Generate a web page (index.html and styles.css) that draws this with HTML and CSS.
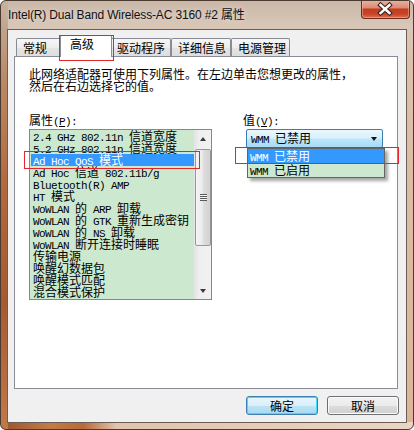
FILE: index.html
```html
<!DOCTYPE html>
<html lang="zh-CN">
<head>
<meta charset="utf-8">
<title>属性</title>
<link rel="stylesheet" href="styles.css">
</head>
<body>
<div class="window">
  <div class="titlebar">
    <span class="title">Intel(R) Dual Band Wireless-AC 3160 #2 属性</span>
    <div class="close">
      <svg width="49" height="19" viewBox="0 0 49 19">
        <path d="M19.5 6 L28.5 14 M28.5 6 L19.5 14" stroke="#3b2622" stroke-width="4.6" stroke-linecap="square" fill="none"/>
        <path d="M19.5 6 L28.5 14 M28.5 6 L19.5 14" stroke="#ffffff" stroke-width="2.4" stroke-linecap="square" fill="none"/>
      </svg>
    </div>
  </div>
  <div class="client">
    <div class="tabs">
      <div class="tab t1">常规</div>
      <div class="tab t2 active">高级</div>
      <div class="tab t3">驱动程序</div>
      <div class="tab t4">详细信息</div>
      <div class="tab t5">电源管理</div>
    </div>
    <div class="panel">
      <p class="desc">此网络适配器可使用下列属性。在左边单击您想更改的属性，<br>然后在右边选择它的值。</p>
      <div class="props">
        <div class="col-prop">
          <div class="label">属性<span class="en">(<u>P</u>):</span></div>
          <div class="listbox">
            <ul class="items">
              <li><span class="en">2.4 GHz 802.11n </span>信道宽度</li>
              <li><span class="en">5.2 GHz 802.11n </span>信道宽度</li>
              <li class="sel"><span class="en">Ad Hoc QoS </span>模式</li>
              <li><span class="en">Ad Hoc </span>信道<span class="en"> 802.11b/g</span></li>
              <li><span class="en">Bluetooth(R) AMP</span></li>
              <li><span class="en">HT </span>模式</li>
              <li><span class="en">WoWLAN </span>的<span class="en"> ARP </span>卸载</li>
              <li><span class="en">WoWLAN </span>的<span class="en"> GTK </span>重新生成密钥</li>
              <li><span class="en">WoWLAN </span>的<span class="en"> NS </span>卸载</li>
              <li><span class="en">WoWLAN </span>断开连接时睡眠</li>
              <li>传输电源</li>
              <li>唤醒幻数据包</li>
              <li>唤醒模式匹配</li>
              <li>混合模式保护</li>
            </ul>
            <div class="vscroll">
              <div class="sb-btn"><span class="tri up"></span></div>
              <div class="track">
                <div class="thumb"><span class="grip"></span></div>
              </div>
              <div class="sb-btn"><span class="tri down"></span></div>
            </div>
          </div>
        </div>
        <div class="col-val">
          <div class="label">值<span class="en">(<u>V</u>):</span></div>
          <div class="combo">
            <span class="combo-text"><span class="en">WMM </span>已禁用</span>
            <span class="caret"></span>
            <ul class="dropdown">
              <li class="sel"><span class="en">WMM </span>已禁用</li>
              <li><span class="en">WMM </span>已启用</li>
            </ul>
          </div>
        </div>
      </div>
    </div>
    <div class="buttons">
      <button class="btn default">确定</button>
      <button class="btn">取消</button>
    </div>
  </div>
  <div class="mark mark-tab"></div>
  <div class="mark mark-item"></div>
  <div class="mark mark-opt"></div>
</div>
</body>
</html>
```
FILE: styles.css
```css
* { box-sizing: border-box; }
html, body {
  margin: 0;
  padding: 0;
  background: #ffffff;
}
body {
  width: 414px;
  height: 430px;
  overflow: hidden;
  font-family: "Noto Sans CJK SC", sans-serif;
  font-size: 12px;
  color: #000;
}
.window {
  position: relative;
  width: 414px;
  height: 430px;
  border: 1px solid #4a3a30;
  border-radius: 6px;
  background:
    linear-gradient(180deg, #c6b3a3 0, #b98a66 18%, #b0683c 45%, #a65a30 70%, #c07a4a 100%) left top / 7px 100% no-repeat,
    linear-gradient(to right, #9a5230 0, #c27b48 12%, #b86a3a 20%, #e0c4ac 28%, #ead6c4 100%) left bottom / 100% 7px no-repeat,
    linear-gradient(180deg, #c9b7a8 0, #d9c7b8 26px, #dcc0a8 60px, #dab59a 100%);
  overflow: hidden;
}
.titlebar {
  display: flex;
  align-items: flex-start;
  height: 28px;
  padding-left: 7px;
  padding-right: 3px;
}
.title {
  font-family: "Liberation Sans", "Noto Sans CJK SC", sans-serif;
  font-size: 12px;
  letter-spacing: -0.15px;
  line-height: 28px;
  color: #111;
  text-shadow: 0 0 6px rgba(255,255,255,.7);
}
.close {
  margin-left: auto;
  width: 49px;
  height: 19px;
  margin-top: -1px;
  border: 1px solid #6a2c20;
  border-top: none;
  border-radius: 0 0 4px 4px;
  background: linear-gradient(180deg, #eab4a4 0, #dc8c76 42%, #c23c20 52%, #c84428 78%, #e07050 100%);
  box-shadow: inset 0 0 0 1px rgba(255,200,180,.45);
}
.close svg { display: block; margin: -1px 0 0 -1px; }

.client {
  margin: 0 6px 6px;
  height: 394px;
  border: 1px solid #6b5d54;
  background: #f0f0f0;
  padding: 5px 7px 0 6px;
}
.tabs {
  display: flex;
  align-items: flex-end;
  height: 21px;
  padding-left: 2px;
}
.tab {
  height: 18px;
  border: 1px solid #898c95;
  border-bottom: none;
  border-radius: 2px 2px 0 0;
  background: linear-gradient(180deg, #f6f6f6 0, #ededed 50%, #e4e4e4 51%, #dedede 100%);
  padding: 1px 0 0 6px;
  line-height: 16px;
  white-space: nowrap;
}
.t1 { width: 46px; }
.t3 { width: 61px; }
.t4 { width: 60px; }
.t5 { width: 59px; }
.tab.active {
  position: relative;
  z-index: 1;
  width: 52px;
  height: 22px;
  margin: 0 -2px -1px;
  background: #ffffff;
  padding: 0 0 0 9px;
}

.panel {
  width: 384px;
  height: 333px;
  border: 1px solid #898c95;
  background: #ffffff;
  padding: 11px 14px 0;
}
.desc {
  margin: 0;
  line-height: 12px;
}
.en {
  font-family: "Liberation Mono", monospace;
  font-size: 11px;
  letter-spacing: -0.6px;
  white-space: pre;
}
.props {
  display: flex;
  margin-top: 22px;
}
.label {
  line-height: 12px;
  height: 12px;
  margin-bottom: 3px;
}
.col-prop { width: 185px; }
.col-val { margin-left: 31px; }

.listbox {
  display: flex;
  height: 171px;
  border: 1px solid #828790;
  background: #cce8cf;
}
.items {
  list-style: none;
  margin: 0;
  padding: 0 0 0 1px;
  flex: 1;
}
.items li {
  height: 12px;
  line-height: 12px;
  padding-left: 2px;
  white-space: nowrap;
}
.items li.sel,
.dropdown li.sel {
  background: #3399ff;
  color: #ffffff;
}
.vscroll {
  width: 17px;
  display: flex;
  flex-direction: column;
  background: linear-gradient(to right, #e3e3e3 0, #eeeeee 20%, #f2f2f2 100%);
  border-left: 1px solid #e6e6e6;
}
.sb-btn {
  height: 17px;
  display: flex;
  align-items: center;
  justify-content: center;
}
.tri {
  width: 0;
  height: 0;
  border-left: 3.5px solid transparent;
  border-right: 3.5px solid transparent;
}
.tri.up { border-bottom: 4px solid #3a3a3a; }
.tri.down { border-top: 4px solid #3a3a3a; }
.track {
  flex: 1;
  padding: 2px 0 0 0;
}
.thumb {
  height: 97px;
  border: 1px solid #979797;
  border-radius: 2px;
  background: linear-gradient(to right, #f5f5f5 0, #eaeaea 45%, #dcdcdc 55%, #d2d2d2 100%);
  display: flex;
  align-items: center;
  justify-content: center;
}
.grip {
  width: 7px;
  height: 7px;
  background: repeating-linear-gradient(180deg, #5a5a5a 0, #5a5a5a 1px, #f4f4f4 1px, #f4f4f4 2px);
}

.combo {
  position: relative;
  margin-left: 3px;
  width: 137px;
  height: 19px;
  border: 1px solid #3c7fb1;
  border-radius: 2px;
  background: linear-gradient(180deg, #eaf6fd 0, #d9f0fc 48%, #bee6fd 52%, #a7d9f5 100%);
  display: flex;
  align-items: center;
  padding-left: 4px;
}
.combo-text { line-height: 14px; }
.caret {
  margin-left: auto;
  margin-right: 5px;
  width: 0;
  height: 0;
  border-left: 3.5px solid transparent;
  border-right: 3.5px solid transparent;
  border-top: 4px solid #111;
}
.dropdown {
  position: absolute;
  z-index: 2;
  top: 18px;
  left: 0;
  width: 138px;
  margin: 0;
  padding: 0;
  list-style: none;
  border: 1px solid #646464;
  background: #ffffff;
  box-shadow: 3px 3px 3px rgba(0,0,0,.35);
}
.dropdown li {
  height: 14px;
  line-height: 14px;
  padding-left: 2px;
  background: #cce8cf;
}

.buttons {
  display: flex;
  justify-content: flex-end;
  gap: 9px;
  margin-top: 7px;
}
.btn {
  width: 72px;
  height: 19px;
  padding: 0;
  font-family: "Noto Sans CJK SC", sans-serif;
  font-size: 12px;
  line-height: 16px;
  color: #000;
  border: 1px solid #707070;
  border-radius: 3px;
  background: linear-gradient(180deg, #f2f2f2 0, #ebebeb 50%, #dddddd 51%, #cfcfcf 100%);
  box-shadow: inset 0 0 0 1px #fbfbfb;
}
.btn.default {
  border-color: #3c7fb1;
  background: linear-gradient(180deg, #e9f6fd 0, #d8eff9 50%, #bde4f6 51%, #a9d9f0 100%);
  box-shadow: inset 0 0 0 1px #48d8fb;
}

.mark {
  position: absolute;
  border: 1px solid #e3262b;
  z-index: 5;
}
.mark-tab { left: 58px; top: 34px; width: 55px; height: 26px; }
.mark-item { left: 23px; top: 150px; width: 176px; height: 18px; }
.mark-opt { left: 234px; top: 146px; width: 164px; height: 17px; }
```
